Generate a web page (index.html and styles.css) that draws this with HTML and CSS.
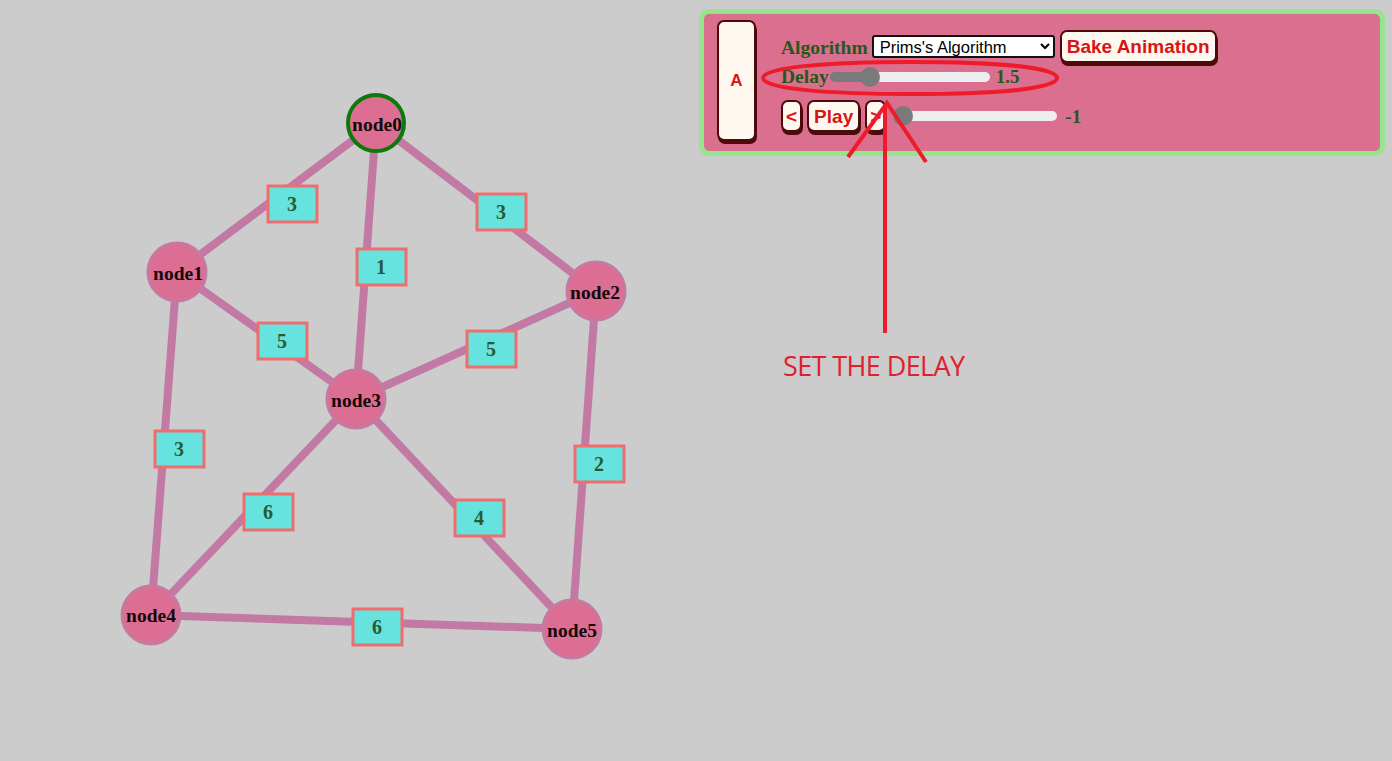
FILE: index.html
```html
<!DOCTYPE html>
<html>
<head>
<meta charset="utf-8">
<link rel="stylesheet" href="styles.css">
</head>
<body>
<div class="page">
  <svg class="graph" width="700" height="761" viewBox="0 0 700 761">
    <g class="edges">
      <line x1="376" y1="123" x2="177" y2="272"/>
      <line x1="376" y1="123" x2="596" y2="291"/>
      <line x1="376" y1="123" x2="356" y2="399"/>
      <line x1="177" y1="272" x2="356" y2="399"/>
      <line x1="596" y1="291" x2="356" y2="399"/>
      <line x1="177" y1="272" x2="151" y2="615"/>
      <line x1="596" y1="291" x2="572" y2="629"/>
      <line x1="356" y1="399" x2="151" y2="615"/>
      <line x1="356" y1="399" x2="572" y2="629"/>
      <line x1="151" y1="615" x2="572" y2="629"/>
    </g>
    <g class="nodes">
      <circle class="start" cx="376" cy="123" r="28"/>
      <circle cx="177" cy="272" r="29"/>
      <circle cx="596" cy="291" r="29"/>
      <circle cx="356" cy="399" r="29"/>
      <circle cx="151" cy="615" r="29"/>
      <circle cx="572" cy="629" r="29"/>
    </g>
    <g class="node-text">
      <text x="377" y="131">node0</text>
      <text x="178" y="280">node1</text>
      <text x="595" y="299">node2</text>
      <text x="356" y="407">node3</text>
      <text x="151" y="622">node4</text>
      <text x="572" y="637">node5</text>
    </g>
    <g class="weights">
      <rect x="268" y="186" width="49" height="36"/><text x="292" y="211">3</text>
      <rect x="477" y="194" width="49" height="36"/><text x="501" y="219">3</text>
      <rect x="357" y="249" width="49" height="36"/><text x="381" y="274">1</text>
      <rect x="258" y="323" width="49" height="36"/><text x="282" y="348">5</text>
      <rect x="467" y="331" width="49" height="36"/><text x="491" y="356">5</text>
      <rect x="155" y="431" width="49" height="36"/><text x="179" y="456">3</text>
      <rect x="575" y="446" width="49" height="36"/><text x="599" y="471">2</text>
      <rect x="244" y="494" width="49" height="36"/><text x="268" y="519">6</text>
      <rect x="455" y="500" width="49" height="36"/><text x="479" y="525">4</text>
      <rect x="353" y="609" width="49" height="36"/><text x="377" y="634">6</text>
    </g>
  </svg>

  <div class="panel">
    <button class="btn btn-a">A</button>
    <div class="controls">
      <div class="row row-algo">
        <span class="label">Algorithm</span>
        <select class="algo-select">
          <option>Prims's Algorithm</option>
        </select>
        <button class="btn btn-bake">Bake Animation</button>
      </div>
      <div class="row row-delay">
        <span class="label">Delay</span>
        <input class="slider slider-delay" type="range" min="0" max="7" step="0.5" value="1.5">
        <span class="value value-delay">1.5</span>
      </div>
      <div class="row row-step">
        <button class="btn btn-small">&lt;</button>
        <button class="btn btn-play">Play</button>
        <button class="btn btn-small">&gt;</button>
        <input class="slider slider-step" type="range" min="-1" max="10" step="1" value="-1">
        <span class="value value-step">-1</span>
      </div>
    </div>
  </div>
</div>

<svg class="annotation" width="1392" height="761" viewBox="0 0 1392 761">
  <path d="M763,78 C763,67 830,62 910,62 C992,62 1057,67 1057,78 C1057,89 992,94 910,94 C830,94 763,89 763,78 Z"/>
  <line x1="885" y1="333" x2="885" y2="106"/>
  <polyline points="848,157 887,103 926,162"/>
</svg>
<div class="note">SET THE DELAY</div>
</body>
</html>
```
FILE: styles.css
```css
html, body {
  margin: 0;
  padding: 0;
  background: #cccccc;
  width: 1392px;
  height: 761px;
  overflow: hidden;
}

.page {
  display: flex;
  align-items: flex-start;
}

.graph {
  flex: 0 0 auto;
  display: block;
}

.edges line {
  stroke: #c279a3;
  stroke-width: 8;
}

.nodes circle {
  fill: #dc6e93;
  stroke: #c57aa2;
  stroke-width: 3;
}

.nodes circle.start {
  stroke: #0b7a0b;
  stroke-width: 4;
}

.node-text text {
  font-family: "Liberation Serif", serif;
  font-weight: bold;
  font-size: 19.5px;
  fill: #140808;
  text-anchor: middle;
}

.weights rect {
  fill: #66e3df;
  stroke: #ef6d6d;
  stroke-width: 3;
}

.weights text {
  font-family: "Liberation Serif", serif;
  font-weight: bold;
  font-size: 20px;
  fill: #2a5a30;
  text-anchor: middle;
}

.panel {
  margin-top: 9px;
  margin-left: -1px;
  width: 663px;
  height: 131px;
  border: 5px solid #94e58c;
  border-radius: 10px;
  background: #db6f8f;
  display: flex;
  align-items: flex-start;
  padding: 6px 0 0 13px;
  box-sizing: content-box;
}

.btn {
  font-family: "Liberation Sans", Arial, sans-serif;
  font-weight: bold;
  color: #d81414;
  background: #fff8f0;
  border: 2px solid #4e0a0a;
  border-radius: 7px;
  box-shadow: 1px 3px 0 #4e0a0a;
  font-size: 19px;
  line-height: 1;
  cursor: pointer;
  margin: 0;
}

.btn-a {
  width: 39px;
  height: 121px;
  padding: 0;
  font-size: 17px;
}

.controls {
  margin-left: 25px;
  margin-top: 10px;
  display: flex;
  flex-direction: column;
}

.row {
  display: flex;
  align-items: center;
}

.row-algo {
  height: 35px;
}

.row-delay {
  height: 22px;
  margin-top: 1px;
}

.row-step {
  height: 34px;
  margin-top: 11px;
}

.label {
  font-family: "Liberation Serif", serif;
  font-weight: bold;
  font-size: 19.5px;
  color: #265818;
}

.algo-select {
  margin-left: 4px;
  margin-top: -2px;
  width: 183px;
  height: 23px;
  font-family: "Liberation Sans", Arial, sans-serif;
  font-size: 16.5px;
  border: 2px solid #111;
  border-radius: 3px;
  background: #ffffff;
  color: #000;
  padding: 0 0 0 2px;
}

.btn-bake {
  margin-left: 5px;
  height: 33px;
  padding: 0 5px;
  margin-top: -2px;
}

.slider {
  -webkit-appearance: none;
  appearance: none;
  height: 10px;
  border-radius: 5px;
  background: #eeeeee;
  margin: 0;
  outline: none;
}

.slider::-webkit-slider-thumb {
  -webkit-appearance: none;
  appearance: none;
  width: 20px;
  height: 20px;
  border-radius: 50%;
  background: #7a7a7a;
}

.slider-delay {
  width: 160px;
  margin-left: 1px;
  background: linear-gradient(to right, #7a7a7a 0, #7a7a7a 40px, #eeeeee 40px);
}

.slider-step {
  width: 164px;
  margin-left: 7px;
}

.value {
  font-family: "Liberation Serif", serif;
  font-weight: bold;
  font-size: 19px;
  color: #265818;
}

.value-delay {
  margin-left: 6px;
}

.value-step {
  margin-left: 8px;
  margin-top: 1px;
}

.btn-small {
  height: 32px;
  padding: 0 3px;
}

.btn-play {
  height: 32px;
  padding: 0 5px;
  margin: 0 5px 0 5px;
}

.annotation {
  position: absolute;
  left: 0;
  top: 0;
  pointer-events: none;
}

.annotation path,
.annotation line,
.annotation polyline {
  fill: none;
  stroke: #ee1c2a;
  stroke-width: 4;
}

.note {
  position: absolute;
  left: 783px;
  top: 347px;
  font-family: "Open Sans", sans-serif;
  font-size: 27px;
  color: #e0202e;
  letter-spacing: -0.6px;
}
```
